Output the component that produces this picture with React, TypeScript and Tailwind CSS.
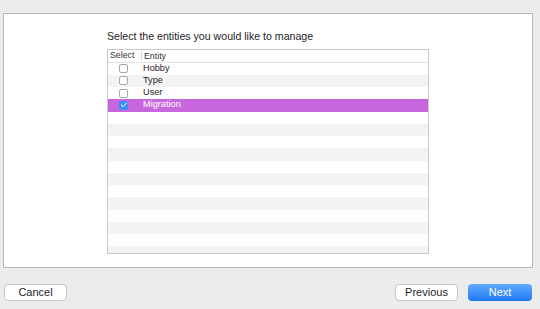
import { Check } from "lucide-react"

const entities = ["Hobby", "Type", "User", "Migration"]

const App = () => {
  const rows = Array.from({ length: 16 }, (_, i) => entities[i])
  const font = { fontFamily: '"Liberation Sans", Arial, sans-serif' }

  return (
    <div className="w-[540px] h-[309px] bg-[#ececec] flex flex-col overflow-hidden" style={font}>
      <div className="mt-[13px] ml-[3px] w-[530px] h-[255px] bg-white border border-[#b9b9b9] pl-[103px] pt-[16px]">
        <p className="text-[10.6px] leading-[13px] text-[#1e1e1e]">Select the entities you would like to manage</p>
        <div className="mt-[6px] w-[322px] h-[205px] border border-[#c9c9c9] overflow-hidden">
          <div className="flex h-[12.5px] items-center border-b border-[#e2e2e2] text-[8.8px] text-[#333]">
            <span className="w-[33px] pl-[2px]">Select</span>
            <span className="h-[10px] border-l border-[#dadada] pl-[2px] leading-[10px]">Entity</span>
          </div>
          {rows.map((name, i) => {
            const selected = name === "Migration"
            const bg = selected ? "bg-[#c867dd]" : i % 2 === 1 ? "bg-[#f3f3f3]" : "bg-white"
            return (
              <div key={i} className={`flex h-[12.25px] items-center ${bg}`}>
                {name && (
                  <>
                    <div className="w-[33px] pl-[11px] mr-[2px]">
                      {selected ? (
                        <span className="w-[9px] h-[9px] rounded-[2px] bg-[#3a8ef7] flex items-center justify-center">
                          <Check size={8} strokeWidth={3} className="text-white" />
                        </span>
                      ) : (
                        <span className="block w-[9px] h-[9px] rounded-[2px] border border-[#a9a9a9] bg-white" />
                      )}
                    </div>
                    <span className={`text-[9.2px] ${selected ? "text-white" : "text-[#1e1e1e]"}`}>{name}</span>
                  </>
                )}
              </div>
            )
          })}
        </div>
      </div>
      <div className="flex items-center mt-[16px] px-[4px] pr-[8px]">
        <button className="w-[63px] h-[17px] bg-white border border-[#c6c6c6] rounded-[4px] text-[11px] text-[#1e1e1e] leading-none">Cancel</button>
        <div className="flex-1" />
        <button className="w-[63px] h-[17px] bg-white border border-[#c6c6c6] rounded-[4px] text-[11px] text-[#1e1e1e] leading-none">Previous</button>
        <button className="ml-[10px] w-[64px] h-[17px] rounded-[4px] bg-gradient-to-b from-[#62acff] to-[#1a78f3] text-[11px] text-white leading-none">Next</button>
      </div>
    </div>
  )
}

export default App
